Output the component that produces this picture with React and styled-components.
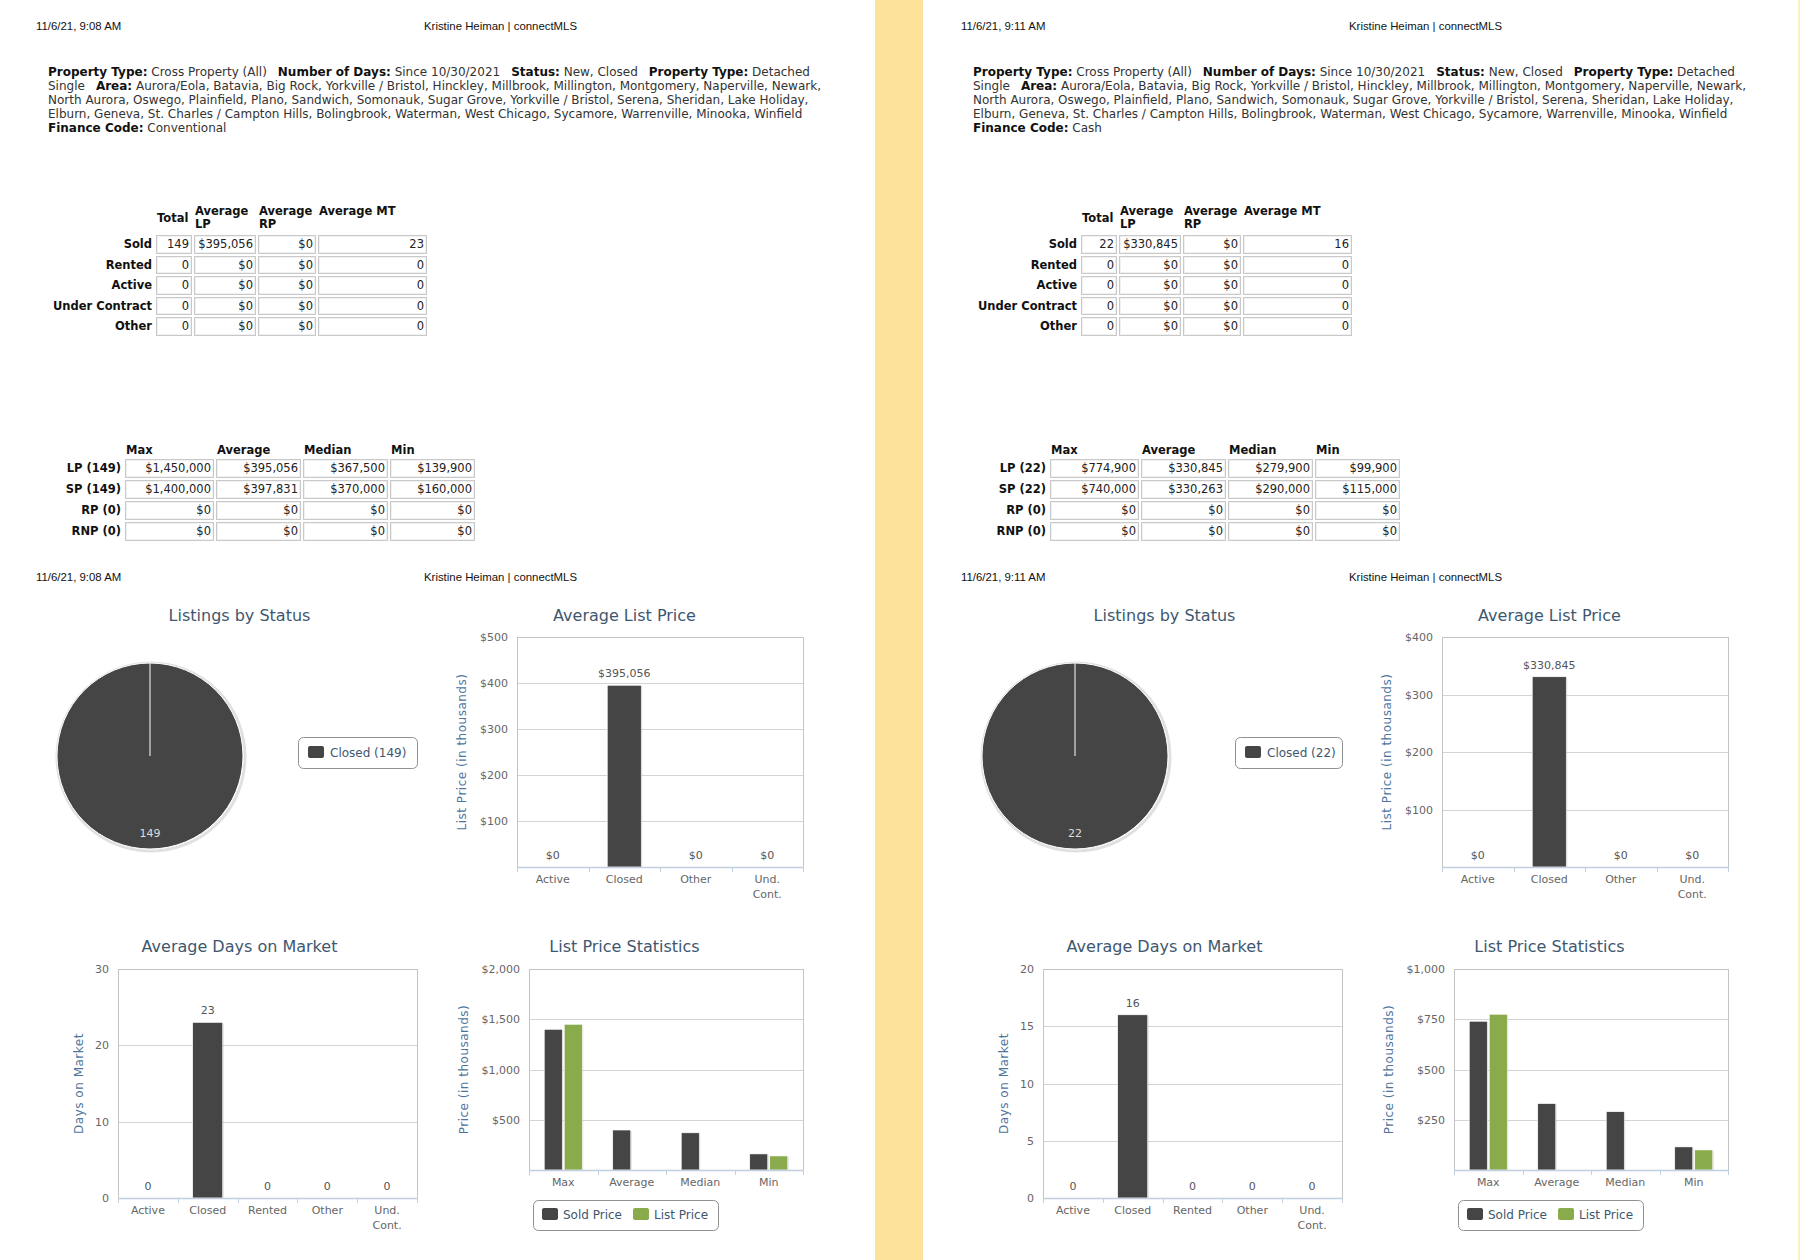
import React from "react";
import styled, { createGlobalStyle } from "styled-components";

const GlobalStyle = createGlobalStyle`
  html, body {
    margin: 0;
    padding: 0;
    background: #fff;
  }
  body {
    font-family: "DejaVu Sans", Verdana, sans-serif;
  }
`;

const Sheet = styled.div`
  display: flex;
  width: 1800px;
  height: 1260px;
  overflow: hidden;
  background: #fff;
`;

const Page = styled.section`
  flex: none;
  width: 875px;
  box-sizing: border-box;
  padding: 20px 0 0 ${(p) => p.$inset}px;
  background: #fff;
`;

const Gutter = styled.div`
  flex: none;
  width: ${(p) => p.$w}px;
  background: ${(p) => p.$color};
`;

const PrintHeader = styled.header`
  display: grid;
  grid-template-columns: 388px auto;
  margin-top: ${(p) => p.$top || 0}px;
  font-family: "Liberation Sans", Arial, sans-serif;
  font-size: 11.4px;
  line-height: 12px;
  color: #111;
`;

const Criteria = styled.div`
  margin: 33px 0 0 12px;
  font-size: 12px;
  line-height: 14px;
  color: #333;
  white-space: nowrap;
`;

const Line = styled.div``;

const Label = styled.b`
  color: #111;
  font-weight: bold;
`;

const Sep = styled.span`
  display: inline-block;
  width: 11px;
`;

const DataTable = styled.table`
  margin: ${(p) => p.$mt}px 0 0 12px;
  border-collapse: separate;
  border-spacing: 2px;
  font-size: 11.5px;
  color: #222;
`;

const RowHead = styled.th`
  width: ${(p) => p.$w}px;
  box-sizing: border-box;
  padding: 0 2px 0 0;
  text-align: right;
  font-weight: bold;
  white-space: nowrap;
  color: #111;
`;

const ColHead = styled.th`
  padding: 0 0 ${(p) => p.$pb || 0}px 1px;
  text-align: left;
  vertical-align: ${(p) => p.$valign || "top"};
  font-weight: bold;
  line-height: 13px;
  color: #111;
`;

const Cell = styled.td`
  width: ${(p) => p.$w}px;
  height: ${(p) => p.$h || 18.5}px;
  box-sizing: border-box;
  padding: 0 2px 0 0;
  text-align: right;
  line-height: 16px;
  border: 1px solid #c9c9c9;
  box-shadow: inset 0 0 0 1px #f1f1f1;
  white-space: nowrap;
`;

const ChartGrid = styled.div`
  display: grid;
  grid-template-columns: repeat(2, 385px);
  margin: 23px 0 0 11px;
`;

const ChartCard = styled.figure`
  display: flex;
  flex-direction: column;
  margin: 0;
`;

const ChartTitle = styled.figcaption`
  text-align: center;
  font-size: 16px;
  line-height: 20px;
  color: #3e576f;
`;

const ChartSvg = styled.svg`
  display: block;
  font-family: "DejaVu Sans", Verdana, sans-serif;
`;

const AxisLabel = styled.text`
  font-size: 11px;
  fill: #666;
`;

const ValueLabel = styled.text`
  font-size: 11px;
  fill: ${(p) => p.$light ? "#ddd" : "#555"};
`;

const AxisTitle = styled.text`
  font-size: 12px;
  letter-spacing: 0.5px;
  fill: #4d759e;
`;

const LegendText = styled.text`
  font-size: 12px;
  fill: #3e576f;
`;

const DARK = "#454545";
const GREEN = "#89ab4b";

const money = (v) => "$" + v.toLocaleString("en-US");

function ColumnChart({ plot, max, ticks, tickFmt, categories, series, labels, yTitle, titleX, legend }) {
  const { l, t, r, b } = plot;
  const cw = (r - l) / categories.length;
  const yOf = (v) => b - (v / max) * (b - t);
  const crisp = (v) => Math.round(v) + 0.5;

  return (
    <ChartSvg width="385" height="311" viewBox="0 0 385 311">
      {ticks.map((v) => (
        <line key={v} x1={l} x2={r} y1={crisp(yOf(v))} y2={crisp(yOf(v))} stroke="#d4d4d4" />
      ))}
      <rect x={l + 0.5} y={t + 0.5} width={r - l} height={b - t} fill="none" stroke="#c4c4c4" />
      {ticks.map((v) => (
        <AxisLabel key={v} x={l - 9} y={yOf(v) + 4} textAnchor="end">
          {tickFmt(v)}
        </AxisLabel>
      ))}
      <AxisTitle
        x={titleX}
        y={(t + b) / 2}
        textAnchor="middle"
        dominantBaseline="central"
        transform={`rotate(-90 ${titleX} ${(t + b) / 2})`}
      >
        {yTitle}
      </AxisTitle>

      {series.map((s, si) =>
        s.values.map((v, i) => {
          if (v == null) return null;
          const x = l + i * cw + cw / 2 + s.offset;
          const y = yOf(v);
          const h = b - y;
          if (h < 0.5) return null;
          return (
            <g key={`${si}-${i}`}>
              <rect x={x + 1} y={y + 1} width={s.width} height={h - 1} fill="rgba(0,0,0,0.13)" />
              <rect x={x} y={y} width={s.width} height={h} fill={s.color} stroke="#fff" strokeWidth="0.6" />
            </g>
          );
        })
      )}

      <line x1={l} x2={r + 1} y1={b + 0.5} y2={b + 0.5} stroke="#c0d0e0" strokeWidth="1.5" />
      {categories.map((_, i) => (
        <line key={i} x1={crisp(l + i * cw)} x2={crisp(l + i * cw)} y1={b} y2={b + 5} stroke="#c0d0e0" />
      ))}
      <line x1={crisp(r)} x2={crisp(r)} y1={b} y2={b + 5} stroke="#c0d0e0" />

      {labels &&
        labels.map((txt, i) => (
          <ValueLabel key={i} x={l + i * cw + cw / 2} y={yOf(series[0].values[i]) - 8} textAnchor="middle">
            {txt}
          </ValueLabel>
        ))}

      {categories.map((lines, i) => (
        <AxisLabel key={i} x={l + i * cw + cw / 2} y={b + 16} textAnchor="middle">
          {lines.map((ln, k) => (
            <tspan key={k} x={l + i * cw + cw / 2} dy={k === 0 ? 0 : 15}>
              {ln}
            </tspan>
          ))}
        </AxisLabel>
      ))}

      {legend && (
        <g>
          <rect x={101.5} y={243.5} width={185} height={30} rx="5" fill="#fff" stroke="#909090" />
          <rect x={110} y={251} width={16} height={12} rx="2" fill={DARK} />
          <LegendText x={131} y={262}>Sold Price</LegendText>
          <rect x={201} y={251} width={16} height={12} rx="2" fill={GREEN} />
          <LegendText x={222} y={262}>List Price</LegendText>
        </g>
      )}
    </ChartSvg>
  );
}

function PieChart({ count, legendWidth }) {
  const cx = 103;
  const cy = 130;
  const r = 93;
  const lx = 370 - legendWidth;
  return (
    <ChartSvg width="385" height="311" viewBox="0 0 385 311">
      <circle cx={cx + 1} cy={cy + 1} r={r + 1} fill="none" stroke="rgba(0,0,0,0.12)" strokeWidth="3" />
      <circle cx={cx} cy={cy} r={r} fill={DARK} stroke="#fff" strokeWidth="1" />
      <line x1={cx} x2={cx} y1={cy - r} y2={cy} stroke="#fff" strokeWidth="1" />
      <ValueLabel $light x={cx} y={cy + 81} textAnchor="middle">
        {count}
      </ValueLabel>
      <rect x={lx + 0.5} y={111.5} width={legendWidth} height={31} rx="5" fill="#fff" stroke="#909090" />
      <rect x={lx + 10} y={120} width={16} height={12} rx="2" fill={DARK} />
      <LegendText x={lx + 32} y={131}>Closed ({count})</LegendText>
    </ChartSvg>
  );
}

const pages = [
  {
    inset: 36,
    time: "11/6/21, 9:08 AM",
    finance: "Conventional",
    sold: ["149", "$395,056", "$0", "23"],
    stats: [
      ["LP (149)", "$1,450,000", "$395,056", "$367,500", "$139,900"],
      ["SP (149)", "$1,400,000", "$397,831", "$370,000", "$160,000"],
      ["RP (0)", "$0", "$0", "$0", "$0"],
      ["RNP (0)", "$0", "$0", "$0", "$0"],
    ],
    closed: 149,
    legendWidth: 119,
    avgLp: { max: 500, ticks: [500, 400, 300, 200, 100], value: 395.056, label: "$395,056" },
    dom: { max: 30, ticks: [30, 20, 10, 0], value: 23 },
    lps: { max: 2000, ticks: [2000, 1500, 1000, 500], sold: [1400, 397.831, 370, 160], list: [1450, null, null, 139.9] },
  },
  {
    inset: 38,
    time: "11/6/21, 9:11 AM",
    finance: "Cash",
    sold: ["22", "$330,845", "$0", "16"],
    stats: [
      ["LP (22)", "$774,900", "$330,845", "$279,900", "$99,900"],
      ["SP (22)", "$740,000", "$330,263", "$290,000", "$115,000"],
      ["RP (0)", "$0", "$0", "$0", "$0"],
      ["RNP (0)", "$0", "$0", "$0", "$0"],
    ],
    closed: 22,
    legendWidth: 107,
    avgLp: { max: 400, ticks: [400, 300, 200, 100], value: 330.845, label: "$330,845" },
    dom: { max: 20, ticks: [20, 15, 10, 5, 0], value: 16 },
    lps: { max: 1000, ticks: [1000, 750, 500, 250], sold: [740, 330.263, 290, 115], list: [774.9, null, null, 99.9] },
  },
];

const countRows = ["Rented", "Active", "Under Contract", "Other"];

function ReportPage({ data }) {
  return (
    <Page $inset={data.inset}>
      <PrintHeader>
        <span>{data.time}</span>
        <span>Kristine Heiman | connectMLS</span>
      </PrintHeader>

      <Criteria>
        <Line>
          <Label>Property Type:</Label> Cross Property (All)<Sep />
          <Label>Number of Days:</Label> Since 10/30/2021<Sep />
          <Label>Status:</Label> New, Closed<Sep />
          <Label>Property Type:</Label> Detached
        </Line>
        <Line>
          Single<Sep />
          <Label>Area:</Label> Aurora/Eola, Batavia, Big Rock, Yorkville / Bristol, Hinckley, Millbrook, Millington,
          Montgomery, Naperville, Newark,
        </Line>
        <Line>
          North Aurora, Oswego, Plainfield, Plano, Sandwich, Somonauk, Sugar Grove, Yorkville / Bristol, Serena,
          Sheridan, Lake Holiday,
        </Line>
        <Line>
          Elburn, Geneva, St. Charles / Campton Hills, Bolingbrook, Waterman, West Chicago, Sycamore, Warrenville,
          Minooka, Winfield
        </Line>
        <Line>
          <Label>Finance Code:</Label> {data.finance}
        </Line>
      </Criteria>

      <DataTable $mt={68}>
        <thead>
          <tr>
            <RowHead $w={104} />
            <ColHead $valign="middle" $pb={2}>Total</ColHead>
            <ColHead $pb={2}>Average LP</ColHead>
            <ColHead $pb={2}>Average RP</ColHead>
            <ColHead $pb={2}>Average MT</ColHead>
          </tr>
        </thead>
        <tbody>
          <tr>
            <RowHead $w={104}>Sold</RowHead>
            <Cell $w={36}>{data.sold[0]}</Cell>
            <Cell $w={62}>{data.sold[1]}</Cell>
            <Cell $w={58}>{data.sold[2]}</Cell>
            <Cell $w={109}>{data.sold[3]}</Cell>
          </tr>
          {countRows.map((name) => (
            <tr key={name}>
              <RowHead $w={104}>{name}</RowHead>
              <Cell $w={36}>0</Cell>
              <Cell $w={62}>$0</Cell>
              <Cell $w={58}>$0</Cell>
              <Cell $w={109}>0</Cell>
            </tr>
          ))}
        </tbody>
      </DataTable>

      <DataTable $mt={104}>
        <thead>
          <tr>
            <RowHead $w={73} />
            <ColHead>Max</ColHead>
            <ColHead>Average</ColHead>
            <ColHead>Median</ColHead>
            <ColHead>Min</ColHead>
          </tr>
        </thead>
        <tbody>
          {data.stats.map(([name, ...vals]) => (
            <tr key={name}>
              <RowHead $w={73}>{name}</RowHead>
              {vals.map((v, i) => (
                <Cell key={i} $w={i === 0 ? 89 : 85} $h={19}>
                  {v}
                </Cell>
              ))}
            </tr>
          ))}
        </tbody>
      </DataTable>

      <PrintHeader $top={28}>
        <span>{data.time}</span>
        <span>Kristine Heiman | connectMLS</span>
      </PrintHeader>

      <ChartGrid>
        <ChartCard>
          <ChartTitle>Listings by Status</ChartTitle>
          <PieChart count={data.closed} legendWidth={data.legendWidth} />
        </ChartCard>
        <ChartCard>
          <ChartTitle>Average List Price</ChartTitle>
          <ColumnChart
            plot={{ l: 85, t: 11, r: 371, b: 241 }}
            max={data.avgLp.max}
            ticks={data.avgLp.ticks}
            tickFmt={money}
            categories={[["Active"], ["Closed"], ["Other"], ["Und.", "Cont."]]}
            series={[{ color: DARK, width: 34, offset: -17, values: [0, data.avgLp.value, 0, 0] }]}
            labels={["$0", data.avgLp.label, "$0", "$0"]}
            yTitle="List Price (in thousands)"
            titleX={30}
          />
        </ChartCard>
        <ChartCard>
          <ChartTitle>Average Days on Market</ChartTitle>
          <ColumnChart
            plot={{ l: 71, t: 12, r: 370, b: 241 }}
            max={data.dom.max}
            ticks={data.dom.ticks}
            tickFmt={(v) => String(v)}
            categories={[["Active"], ["Closed"], ["Rented"], ["Other"], ["Und.", "Cont."]]}
            series={[{ color: DARK, width: 30, offset: -15, values: [0, data.dom.value, 0, 0, 0] }]}
            labels={["0", String(data.dom.value), "0", "0", "0"]}
            yTitle="Days on Market"
            titleX={32}
          />
        </ChartCard>
        <ChartCard>
          <ChartTitle>List Price Statistics</ChartTitle>
          <ColumnChart
            plot={{ l: 97, t: 12, r: 371, b: 213 }}
            max={data.lps.max}
            ticks={data.lps.ticks}
            tickFmt={money}
            categories={[["Max"], ["Average"], ["Median"], ["Min"]]}
            series={[
              { color: DARK, width: 18, offset: -19, values: data.lps.sold },
              { color: GREEN, width: 18, offset: 1, values: data.lps.list },
            ]}
            yTitle="Price (in thousands)"
            titleX={32}
            legend
          />
        </ChartCard>
      </ChartGrid>
    </Page>
  );
}

export default function App() {
  return (
    <>
      <GlobalStyle />
      <Sheet>
        <ReportPage data={pages[0]} />
        <Gutter $w={48} $color="#fde39a" />
        <ReportPage data={pages[1]} />
        <Gutter $w={2} $color="#fbefc6" />
      </Sheet>
    </>
  );
}
